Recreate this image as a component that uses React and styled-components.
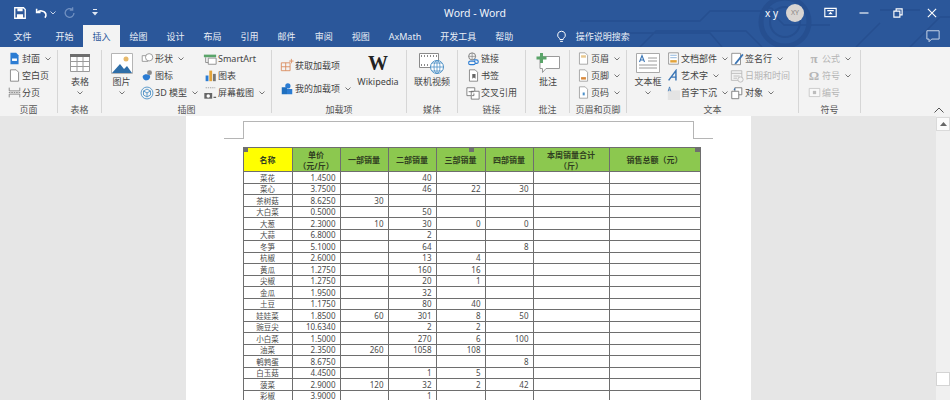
import React from "react";
import styled, { createGlobalStyle } from "styled-components";

const FONT = `"Noto Sans", "Noto Sans CJK SC", sans-serif`;
const BLUE = "#2b579a";
const RIBBON = "#f3f3f3";

const rows = [
  ["菜花", "1.4500", "", "40", "", ""],
  ["菜心", "3.7500", "", "46", "22", "30"],
  ["茶树菇", "8.6250", "30", "", "", ""],
  ["大白菜", "0.5000", "", "50", "", ""],
  ["大葱", "2.3000", "10", "30", "0", "0"],
  ["大蒜", "6.8000", "", "2", "", ""],
  ["冬笋", "5.1000", "", "64", "", "8"],
  ["杭椒", "2.6000", "", "13", "4", ""],
  ["黄瓜", "1.2750", "", "160", "16", ""],
  ["尖椒", "1.2750", "", "20", "1", ""],
  ["金瓜", "1.9500", "", "32", "", ""],
  ["土豆", "1.1750", "", "80", "40", ""],
  ["娃娃菜", "1.8500", "60", "301", "8", "50"],
  ["豌豆尖", "10.6340", "", "2", "2", ""],
  ["小白菜", "1.5000", "", "270", "6", "100"],
  ["油菜", "2.3500", "260", "1058", "108", ""],
  ["鹌鹑蛋", "8.6750", "", "", "", "8"],
  ["白玉菇", "4.4500", "", "1", "5", ""],
  ["菠菜", "2.9000", "120", "32", "2", "42"],
  ["彩椒", "3.9000", "", "1", "", ""],
];

const tabs = ["开始", "插入", "绘图", "设计", "布局", "引用", "邮件", "审阅", "视图", "AxMath", "开发工具", "帮助"];

const GlobalStyle = createGlobalStyle`
  html, body {
    margin: 0;
    padding: 0;
    background: #e6e6e6;
  }
  body {
    font-family: ${FONT};
  }
`;

// small icons, drawn on a 16 unit box
const Svg = ({ size = 13, box = 16, children }) => (
  <svg width={size} height={size} viewBox={`0 0 ${box} ${box}`} fill="none" style={{ flex: "none" }}>
    {children}
  </svg>
);

const SaveIcon = () => (
  <Svg size={14}>
    <path d="M2 2h10l2 2v10H2z" stroke="#fff" strokeWidth="1.5" />
    <path d="M5 2.500h6v3.500H5zM4.500 9.500h7V14h-7z" fill="#fff" />
  </Svg>
);
const UndoIcon = () => (
  <Svg size={14}>
    <path d="M3 3v4.500h4.500" stroke="#fff" strokeWidth="1.800" />
    <path d="M3.500 7.500C6 4.500 12 5 13.500 9c.6 1.800 0 3.300-1 4.500" stroke="#fff" strokeWidth="1.800" />
  </Svg>
);
const RedoOff = () => (
  <Svg size={14}>
    <path d="M12.500 8a5 5 0 1 1-1.700-3.800M11 1.500v3.300H7.700" stroke="#6f8fc0" strokeWidth="1.500" />
  </Svg>
);
const QuickChevron = () => (
  <svg width="6" height="4" viewBox="0 0 6 4" fill="none">
    <path d="M.5.500L3 3 5.500.5" stroke="#c8d5ea" />
  </svg>
);
const Customize = () => (
  <svg width="6" height="7" viewBox="0 0 6 7" style={{ marginLeft: 8 }}>
    <path d="M1 0h4v1H1zM0 3h6L3 6.500z" fill="#dfe7f3" />
  </svg>
);
const RibbonDisplay = () => (
  <Svg size={13}>
    <path d="M1 3h14v10H1z" stroke="#fff" strokeWidth="1.400" />
    <path d="M4 5h8v1.500H4zM8 7l2.800 3H5.200z" fill="#fff" />
  </Svg>
);
const Minimize = () => (
  <Svg size={12}>
    <path d="M2 8h12" stroke="#fff" strokeWidth="1.500" />
  </Svg>
);
const Restore = () => (
  <Svg size={12}>
    <path d="M2.500 5.500h8v8h-8zM5.500 5.500v-3h8v8h-3" stroke="#fff" strokeWidth="1.500" />
  </Svg>
);
const CloseIcon = () => (
  <Svg size={12}>
    <path d="M2.500 2.500l11 11M13.500 2.500l-11 11" stroke="#fff" strokeWidth="1.500" />
  </Svg>
);
const CommentBubble = () => (
  <Svg size={14}>
    <path d="M1 2h14v9.500H6.500L3.500 14.500v-3H1z" stroke="#cdd8ea" strokeWidth="1.100" />
  </Svg>
);
const Bulb = () => (
  <Svg size={13}>
    <path d="M8 1.500a4.700 4.700 0 0 0-2.800 8.500c.6.500.8 1 .8 1.700h4c0-.7.200-1.200.8-1.700A4.700 4.700 0 0 0 8 1.500zM6.300 14h3.400" stroke="#fff" strokeWidth="1.200" />
  </Svg>
);

const Cover = () => (
  <Svg>
    <path d="M3 1h7l3 3v11H3z" fill="#2b7cd3" />
    <path d="M5 8h6v3H5z" fill="#fff" />
  </Svg>
);
const BlankPage = () => (
  <Svg>
    <path d="M3 1h7l3 3v11H3z" fill="#fff" stroke="#777" />
  </Svg>
);
const PageBreak = () => (
  <Svg>
    <path d="M1.500 2v4h13V2M1.500 14v-4h13v4" stroke="#777" />
    <path d="M1 8h14" stroke="#777" strokeDasharray="2 1" />
  </Svg>
);
const Shapes = () => (
  <Svg>
    <path d="M1.500 4.500h7v7h-7z" fill="#fff" stroke="#8a8a8a" />
    <circle cx="10" cy="6.500" r="4.500" fill="#fff" stroke="#8a8a8a" />
  </Svg>
);
const IconsIcon = () => (
  <Svg>
    <path d="M2 9c2-3 6-3 9-1 1 3-1 6-5 6-2 0-4-2-4-5z" fill="#2b7cd3" />
    <circle cx="10.500" cy="4.500" r="3" fill="#8a8a8a" />
  </Svg>
);
const Cube = () => (
  <Svg size={14}>
    <circle cx="8" cy="8" r="6.800" stroke="#4d91c6" />
    <path d="M8 3.500l4 2.200v4.600l-4 2.200-4-2.200V5.700zM4 5.700l4 2.200 4-2.200M8 7.900v4.600" stroke="#4d91c6" />
  </Svg>
);
const SmartArtIcon = () => (
  <Svg size={14}>
    <path d="M1 3h14v3H1z" fill="#5aa469" />
    <path d="M6 7h9v7H6z" fill="#fff" stroke="#888" />
    <path d="M3 6v6h3" stroke="#888" />
  </Svg>
);
const Bars = () => (
  <Svg>
    <path d="M2 8h3.500v7H2z" fill="#2b7cd3" />
    <path d="M6.500 2H10v13H6.500z" fill="#e2a33a" />
    <path d="M11 6h3.500v9H11z" fill="#777" />
  </Svg>
);
const Screenshot = () => (
  <Svg size={14}>
    <path d="M3 2h11" stroke="#999" strokeDasharray="1.500 1" />
    <path d="M1.500 8h9v6.500h-9z" fill="#666" />
    <circle cx="6" cy="11.300" r="2" fill="#fff" />
    <path d="M12 13h3" stroke="#666" strokeWidth="1.500" />
  </Svg>
);
const StoreAdd = () => (
  <Svg size={14}>
    <path d="M1.500 5.500h10v9h-10zM6.500 5.500v9M1.500 10h10" stroke="#d98a5b" />
    <path d="M13 1v5M10.500 3.500h5" stroke="#d98a5b" />
  </Svg>
);
const MyAddins = () => (
  <Svg size={14}>
    <path d="M2 6h6v8H2z" fill="#1f6fbf" />
    <path d="M8 8h6v6H8z" fill="#2b7cd3" />
    <circle cx="9" cy="4.500" r="3" fill="#2b7cd3" />
  </Svg>
);
const LinkIcon = () => (
  <Svg size={14}>
    <circle cx="7" cy="5" r="4" stroke="#777" />
    <path d="M3 5h8M7 1v8" stroke="#777" strokeWidth=".7" />
    <path d="M5 10.500h3.500a2 2 0 0 1 0 4H5a2 2 0 0 1 0-4zM9 9h3a2 2 0 0 1 0 4h-1" stroke="#2b7cd3" strokeWidth="1.300" />
  </Svg>
);
const Bookmark = () => (
  <Svg>
    <path d="M3 1h7l3 3v11H3z" fill="#fff" stroke="#777" />
    <path d="M6.500 6h4v6l-2-1.500-2 1.500z" fill="#666" />
  </Svg>
);
const CrossRef = () => (
  <Svg size={14}>
    <path d="M1 2h9v9H1z" fill="#fff" stroke="#777" />
    <path d="M6 6h9v9H6z" fill="#fff" stroke="#777" />
    <path d="M3 6.500h6M9 8.500v2.500h-2" stroke="#666" />
  </Svg>
);
const PageHeader = () => (
  <Svg>
    <path d="M3 1h7l3 3v11H3z" fill="#fff" stroke="#999" />
    <path d="M5 4h6v3H5z" fill="#e9c88f" />
  </Svg>
);
const PageFooter = () => (
  <Svg>
    <path d="M3 1h7l3 3v11H3z" fill="#fff" stroke="#999" />
    <path d="M5 10h6v3H5z" fill="#d98a3d" />
  </Svg>
);
const PageNumber = () => (
  <Svg>
    <path d="M3 1h7l3 3v11H3z" fill="#fff" stroke="#999" />
    <path d="M7 8h2.500v3.500H7z" fill="#4b8fc9" />
  </Svg>
);
const DocParts = () => (
  <Svg>
    <path d="M2 1h12v14H2z" fill="#fff" stroke="#888" />
    <path d="M4 4h8M4 7h8" stroke="#7aa7d6" />
    <path d="M4 10h8v3H4z" fill="#e2a33a" />
  </Svg>
);
const WordArt = () => (
  <Svg>
    <path d="M2 14L11 2v12M5 10h7" stroke="#3a75b5" strokeWidth="1.800" />
  </Svg>
);
const DropCap = () => (
  <Svg size={14}>
    <path d="M2 5h14v11H2z" fill="#e4e4e4" />
    <path d="M2.500 6l1.500-5 1.500 5M3 4.500h2" stroke="#3a75b5" strokeWidth=".9" />
  </Svg>
);
const Signature = () => (
  <Svg size={14}>
    <path d="M2 1.500h10v13H2z" fill="#fff" stroke="#888" />
    <path d="M6 12L14 2l1.500 1.500L7.500 13.500 5 14z" fill="#3a75b5" />
  </Svg>
);
const DateTime = () => (
  <Svg size={14}>
    <path d="M1.500 2h12v11h-12zM1.500 5h12M4 8h7M4 10.500h4" stroke="#b9b9b9" />
    <circle cx="12" cy="12" r="3" fill={RIBBON} stroke="#b9b9b9" />
  </Svg>
);
const ObjectIcon = () => (
  <Svg size={14}>
    <path d="M5.500 2h8v8h-8z" fill="#fff" stroke="#777" />
    <path d="M2 6h8v8.500H2z" fill="#fff" stroke="#777" />
    <path d="M4 4l2-2v3z" fill="#3a75b5" />
  </Svg>
);
const NumberBox = () => (
  <Svg size={13}>
    <path d="M1.500 3h13v10h-13z" fill="#f8f8f8" stroke="#c4c4c4" />
    <path d="M6 6h4v4H6z" fill="#bcbcbc" />
  </Svg>
);

const BigTable = () => (
  <svg width="20" height="18" viewBox="0 0 20 18">
    <path d="M0 0h20v3H0z" fill="#6e6e6e" />
    <path d="M.5 3v14.500h19V3M.5 7.500h19M.5 12.500h19M7 3v14.500M13 3v14.500" stroke="#9a9a9a" fill="#fff" />
  </svg>
);
const BigPicture = () => (
  <svg width="22" height="21" viewBox="0 0 22 21">
    <path d="M.5.500h21v20H.5z" fill="#fff" stroke="#b5b5b5" />
    <path d="M1 20l8-9 4 5 3-3 5 7z" fill="#2f6ea8" />
    <circle cx="15" cy="6" r="2.500" fill="#e7b96a" />
  </svg>
);
const BigVideo = () => (
  <svg width="26" height="23" viewBox="0 0 26 23" fill="none">
    <path d="M.5 1.500h19v14H.5z" fill="#fff" stroke="#8a8a8a" />
    <path d="M2 4h1M5 4h1M8 4h1M11 4h1M14 4h1M17 4h1M2 13h1M5 13h1M8 13h1" stroke="#8a8a8a" strokeWidth="2" />
    <circle cx="18" cy="15" r="6.500" fill="#fff" stroke="#4d91c6" />
    <path d="M11.500 15h13M18 8.500v13M13 11h10M13 19h10" stroke="#4d91c6" strokeWidth=".8" />
    <ellipse cx="18" cy="15" rx="3" ry="6.500" stroke="#4d91c6" strokeWidth=".8" />
  </svg>
);
const BigComment = () => (
  <svg width="24" height="20" viewBox="0 0 24 20" fill="none">
    <path d="M4 3.500h19.500v12H10l-3.500 4v-4H4z" fill="#fff" stroke="#9a9a9a" />
    <path d="M4 0h3v3.500h3.500v3H7V10H4V6.500H.5v-3H4z" fill="#5aa469" />
  </svg>
);
const BigTextBox = () => (
  <svg width="24" height="20" viewBox="0 0 24 20" fill="none">
    <path d="M.5.500h23v19H.5z" fill="#fff" stroke="#aaa" />
    <path d="M12 5h9M12 8h9M3 12h18M3 15h18" stroke="#9a9a9a" />
    <path d="M3.500 9l2.500-6.500L8.500 9M4.500 7h3" stroke="#3a75b5" strokeWidth="1.100" />
  </svg>
);
const CircuitArt = () => (
  <Circuit viewBox="0 0 370 47" width="370" height="47" fill="none" stroke="#264f90" strokeWidth="1.500">
    <path d="M0 21h120l10-10h60l14 14h46" />
    <path d="M0 33h130l12 14M60 47l16-16h90l16 16" />
    <circle cx="190" cy="11" r="3" />
    <circle cx="205" cy="22" r="24" strokeWidth="5" />
    <circle cx="205" cy="22" r="15" strokeWidth="2" />
    <path d="M276 47l24-24M330 47l30-30h10M300 10h40" />
  </Circuit>
);

const Chevron = ({ $below }) => (
  <CaretSvg $below={$below} width="6" height="4" viewBox="0 0 6 4" fill="none">
    <path d="M.5.500L3 3 5.500.5" stroke="#777" />
  </CaretSvg>
);

const SmallButton = ({ icon, label, caret, off }) => (
  <SmallRow $off={off}>
    <IconSlot>{icon}</IconSlot>
    <span>{label}</span>
    {caret && <Chevron />}
  </SmallRow>
);

const BigButton = ({ icon, label, caret, $w, $left }) => (
  <BigBtn $w={$w} $left={$left}>
    <BigIcon>{icon}</BigIcon>
    <span>{label}</span>
    {caret && <Chevron $below />}
  </BigBtn>
);

// Group keeps the label with its body
const Group = ({ $w, label, children }) => (
  <GroupBox $w={$w}>
    <GroupBody>{children}</GroupBody>
    <GroupLabel>{label}</GroupLabel>
  </GroupBox>
);

const App = () => (
  <>
    <GlobalStyle />
    <Window>
      <Header>
        <CircuitArt />
        <TitleRow>
          <QuickAccess>
            <SaveIcon />
            <QuickPair>
              <UndoIcon />
              <QuickChevron />
            </QuickPair>
            <RedoOff />
            <Customize />
          </QuickAccess>
          <Title>Word - Word</Title>
          <WindowControls>
            <UserName>x y</UserName>
            <Avatar>XY</Avatar>
            <ControlSlot>
              <RibbonDisplay />
            </ControlSlot>
            <ControlSlot>
              <Minimize />
            </ControlSlot>
            <ControlSlot>
              <Restore />
            </ControlSlot>
            <ControlSlot>
              <CloseIcon />
            </ControlSlot>
          </WindowControls>
        </TitleRow>
        <TabRow>
          <FileTab>文件</FileTab>
          {tabs.map((t) => (
            <Tab key={t} $active={t === "插入"}>
              {t}
            </Tab>
          ))}
          <SearchHint>
            <Bulb />
            操作说明搜索
          </SearchHint>
          <CommentSlot>
            <CommentBubble />
          </CommentSlot>
        </TabRow>
      </Header>

      <Ribbon>
        <Group $w={58} label="页面">
          <Stack $pad={7}>
            <SmallButton icon={<Cover />} label="封面" caret />
            <SmallButton icon={<BlankPage />} label="空白页" />
            <SmallButton icon={<PageBreak />} label="分页" />
          </Stack>
        </Group>
        <Group $w={44} label="表格">
          <BigButton $w={44} icon={<BigTable />} label="表格" caret />
        </Group>
        <Group $w={170} label="插图">
          <BigButton $w={38} $left={1} icon={<BigPicture />} label="图片" caret />
          <Stack $w={63}>
            <SmallButton icon={<Shapes />} label="形状" caret />
            <SmallButton icon={<IconsIcon />} label="图标" />
            <SmallButton icon={<Cube />} label="3D 模型" caret />
          </Stack>
          <Stack>
            <SmallButton icon={<SmartArtIcon />} label="SmartArt" />
            <SmallButton icon={<Bars />} label="图表" />
            <SmallButton icon={<Screenshot />} label="屏幕截图" caret />
          </Stack>
        </Group>
        <Group $w={135} label="加载项">
          <Stack $pad={8} $w={83} $wide>
            <SmallButton icon={<StoreAdd />} label="获取加载项" />
            <SmallButton icon={<MyAddins />} label="我的加载项" caret />
          </Stack>
          <BigButton $w={46} icon={<WikiMark>W</WikiMark>} label="Wikipedia" />
        </Group>
        <Group $w={51} label="媒体">
          <BigButton $w={50} icon={<BigVideo />} label="联机视频" />
        </Group>
        <Group $w={68} label="链接">
          <Stack $pad={8}>
            <SmallButton icon={<LinkIcon />} label="链接" />
            <SmallButton icon={<Bookmark />} label="书签" />
            <SmallButton icon={<CrossRef />} label="交叉引用" />
          </Stack>
        </Group>
        <Group $w={44} label="批注">
          <BigButton $w={44} icon={<BigComment />} label="批注" />
        </Group>
        <Group $w={57} label="页眉和页脚">
          <Stack $pad={6}>
            <SmallButton icon={<PageHeader />} label="页眉" caret />
            <SmallButton icon={<PageFooter />} label="页脚" caret />
            <SmallButton icon={<PageNumber />} label="页码" caret />
          </Stack>
        </Group>
        <Group $w={172} label="文本">
          <BigButton $w={39} $left={3} icon={<BigTextBox />} label="文本框" caret />
          <Stack $w={64}>
            <SmallButton icon={<DocParts />} label="文档部件" caret />
            <SmallButton icon={<WordArt />} label="艺术字" caret />
            <SmallButton icon={<DropCap />} label="首字下沉" caret />
          </Stack>
          <Stack>
            <SmallButton icon={<Signature />} label="签名行" caret />
            <SmallButton icon={<DateTime />} label="日期和时间" off />
            <SmallButton icon={<ObjectIcon />} label="对象" caret />
          </Stack>
        </Group>
        <Group $w={62} label="符号">
          <Stack $pad={8}>
            <SmallButton icon={<SymbolMark>π</SymbolMark>} label="公式" caret off />
            <SmallButton icon={<SymbolMark>Ω</SymbolMark>} label="符号" caret off />
            <SmallButton icon={<NumberBox />} label="编号" off />
          </Stack>
        </Group>
        <Collapse>
          <svg width="10" height="6" viewBox="0 0 10 6" fill="none">
            <path d="M.5 5.500L5 1l4.500 4.500" stroke="#555" />
          </svg>
        </Collapse>
      </Ribbon>

      <Workspace>
        <DocArea>
          <Page>
            <HeaderMark />
            <TableWrap>
              <Handle $at="left" />
              <Handle $at="middle" />
              <Handle $at="right" />
              <Sheet>
                <colgroup>
                  {[49, 48, 48, 48, 49, 48, 76, 91].map((w, i) => (
                    <col key={i} style={{ width: w }} />
                  ))}
                </colgroup>
                <thead>
                  <tr>
                    <HeadCell $yellow>名称</HeadCell>
                    <HeadCell>
                      单价
                      <br />
                      （元/斤）
                    </HeadCell>
                    <HeadCell>一部销量</HeadCell>
                    <HeadCell>二部销量</HeadCell>
                    <HeadCell>三部销量</HeadCell>
                    <HeadCell>四部销量</HeadCell>
                    <HeadCell>
                      本周销量合计
                      <br />
                      （斤）
                    </HeadCell>
                    <HeadCell>销售总额（元）</HeadCell>
                  </tr>
                </thead>
                <tbody>
                  {rows.map((r) => (
                    <tr key={r[0]}>
                      <NameCell>{r[0]}</NameCell>
                      {r.slice(1).map((v, i) => (
                        <NumCell key={i}>{v}</NumCell>
                      ))}
                      <NumCell />
                      <NumCell />
                    </tr>
                  ))}
                </tbody>
              </Sheet>
            </TableWrap>
          </Page>
        </DocArea>
        <ScrollBar>
          <ScrollUp>
            <svg width="7" height="4" viewBox="0 0 7 4">
              <path d="M3.500 0L7 4H0z" fill="#666" />
            </svg>
          </ScrollUp>
          <ScrollThumb />
        </ScrollBar>
      </Workspace>
    </Window>
  </>
);

const Window = styled.div`
  width: 950px;
  height: 400px;
  overflow: hidden;
  display: flex;
  flex-direction: column;
  background: #e6e6e6;
`;

const Header = styled.header`
  height: 47px;
  flex: none;
  background: ${BLUE};
  position: relative;
  color: #fff;
`;

const Circuit = styled.svg`
  position: absolute;
  top: 0;
  right: 0;
`;

const TitleRow = styled.div`
  position: relative;
  height: 25px;
  display: grid;
  grid-template-columns: 1fr auto 1fr;
  align-items: center;
`;

const QuickAccess = styled.div`
  display: flex;
  align-items: center;
  gap: 7px;
  padding-left: 13px;
`;

const QuickPair = styled.div`
  display: flex;
  align-items: center;
  gap: 2px;
`;

const Title = styled.div`
  font-size: 10.5px;
  color: #f2f5fa;
`;

const WindowControls = styled.div`
  display: flex;
  align-items: center;
  justify-content: flex-end;
  padding-right: 1px;
`;

const UserName = styled.span`
  font-size: 10px;
  margin-right: 8px;
`;

const Avatar = styled.div`
  width: 18px;
  height: 18px;
  border-radius: 50%;
  background: #d9d5d2;
  color: #8a8683;
  font-size: 7px;
  display: flex;
  align-items: center;
  justify-content: center;
  margin-right: 9px;
`;

const ControlSlot = styled.div`
  width: 34px;
  display: flex;
  justify-content: center;
`;

const TabRow = styled.nav`
  position: relative;
  height: 22px;
  display: flex;
  align-items: stretch;
  padding-left: 4px;
  font-size: 9px;
`;

const Tab = styled.div`
  padding: 0 9.5px;
  display: flex;
  align-items: center;
  color: ${(p) => (p.$active ? "#2b579a" : "#e9eef6")};
  background: ${(p) => (p.$active ? RIBBON : "transparent")};
`;

const FileTab = styled(Tab)`
  margin-right: 5px;
`;

const SearchHint = styled.div`
  display: flex;
  align-items: center;
  gap: 8px;
  margin-left: 32px;
  color: #e9eef6;
`;

const CommentSlot = styled.div`
  margin-left: auto;
  margin-right: 10px;
  display: flex;
  align-items: center;
`;

const Ribbon = styled.section`
  height: 69px;
  flex: none;
  background: ${RIBBON};
  display: flex;
  position: relative;
  color: #444;
  font-size: 9px;
  box-sizing: border-box;
`;

const GroupBox = styled.div`
  width: ${(p) => p.$w}px;
  flex: none;
  box-sizing: border-box;
  display: flex;
  flex-direction: column;
  padding-top: 3px;
  position: relative;
  &::after {
    content: "";
    position: absolute;
    right: 0;
    top: 3px;
    bottom: 3px;
    width: 1px;
    background: #d6d6d6;
  }
`;

const GroupBody = styled.div`
  flex: 1;
  display: flex;
  min-height: 0;
`;

const GroupLabel = styled.div`
  height: 12px;
  line-height: 12px;
  text-align: center;
  color: #555;
  padding-right: 1px;
`;

const Stack = styled.div`
  display: flex;
  flex-direction: column;
  justify-content: ${(p) => (p.$wide ? "space-evenly" : "flex-start")};
  padding-left: ${(p) => p.$pad || 0}px;
  width: ${(p) => (p.$w ? `${p.$w}px` : "auto")};
  flex: none;
  box-sizing: border-box;
`;

const SmallRow = styled.div`
  height: 17px;
  display: flex;
  align-items: center;
  gap: 1px;
  white-space: nowrap;
  color: ${(p) => (p.$off ? "#b5b5b5" : "#444")};
`;

const IconSlot = styled.div`
  width: 14px;
  display: flex;
  justify-content: center;
  align-items: center;
  flex: none;
`;

const CaretSvg = styled.svg`
  flex: none;
  margin-left: ${(p) => (p.$below ? 0 : 4)}px;
  margin-top: ${(p) => (p.$below ? 3 : 0)}px;
`;

const BigBtn = styled.div`
  width: ${(p) => p.$w}px;
  padding-left: ${(p) => p.$left || 0}px;
  box-sizing: border-box;
  flex: none;
  display: flex;
  flex-direction: column;
  align-items: center;
  white-space: nowrap;
  line-height: 12px;
`;

const BigIcon = styled.div`
  height: 26px;
  display: flex;
  align-items: center;
  justify-content: center;
`;

const WikiMark = styled.span`
  font-family: "Liberation Serif", serif;
  font-size: 20px;
  line-height: 20px;
  font-weight: 700;
  color: #222;
`;

const SymbolMark = styled.span`
  font-family: "Liberation Serif", serif;
  font-size: 13px;
  font-weight: 700;
  color: #b5b5b5;
`;

const Collapse = styled.div`
  position: absolute;
  right: 6px;
  bottom: 3px;
  display: flex;
`;

const Workspace = styled.main`
  flex: 1;
  min-height: 0;
  display: flex;
`;

const DocArea = styled.div`
  flex: 1;
  min-width: 0;
  display: flex;
  justify-content: center;
  overflow: hidden;
`;

const Page = styled.div`
  width: 565px;
  height: 400px;
  flex: none;
  background: #fff;
  box-sizing: border-box;
  padding: 5px 0 0 57px;
`;

const HeaderMark = styled.div`
  width: 451px;
  height: 18px;
  box-sizing: border-box;
  border: 1px solid #b5b5b5;
  border-bottom: none;
  position: relative;
  &::before,
  &::after {
    content: "";
    position: absolute;
    bottom: 0;
    width: 20px;
    height: 1px;
    background: #b5b5b5;
  }
  &::before {
    left: -20px;
  }
  &::after {
    right: -20px;
  }
`;

const TableWrap = styled.div`
  position: relative;
  margin: 8px 0 0 0;
  width: 457px;
`;

const Handle = styled.i`
  position: absolute;
  top: 0;
  width: 5px;
  height: 5px;
  background: #6f6f6f;
  left: ${(p) => ({ left: "0", middle: "226px", right: "452px" })[p.$at]};
`;

const Sheet = styled.table`
  border-collapse: collapse;
  table-layout: fixed;
  width: 457px;
  font-size: 8px;
  color: #4a4a4a;
  td,
  th {
    border: 1px solid #6e6e6e;
    padding: 0;
  }
  /* rows alternate 12 and 11 px, as the 11.5 px rows land on the screen */
  tbody tr:nth-child(even) td {
    height: 10px;
  }
`;

const HeadCell = styled.th`
  height: 23px;
  line-height: 11px;
  font-size: 8px;
  font-weight: 700;
  text-align: center;
  color: #2f3d20;
  background: ${(p) => (p.$yellow ? "#ffff00" : "#8cc84f")};
`;

const NameCell = styled.td`
  height: 11px;
  line-height: 10px;
  text-align: center;
  font-size: 7.5px;
  overflow: hidden;
`;

const NumCell = styled.td`
  height: 11px;
  line-height: 10px;
  text-align: right;
  overflow: hidden;
  && {
    padding-right: 4px;
  }
`;

const ScrollBar = styled.aside`
  width: 14px;
  flex: none;
  background: #f0f0f0;
  display: flex;
  flex-direction: column;
  padding-bottom: 14px;
  box-sizing: border-box;
`;

const ScrollUp = styled.div`
  height: 12px;
  margin-top: 1px;
  background: #fbfbfb;
  border: 1px solid #dadada;
  display: flex;
  align-items: center;
  justify-content: center;
`;

const ScrollThumb = styled.div`
  height: 12px;
  margin-top: auto;
  background: #fff;
  border: 1px solid #d4d4d4;
`;

export default App;
